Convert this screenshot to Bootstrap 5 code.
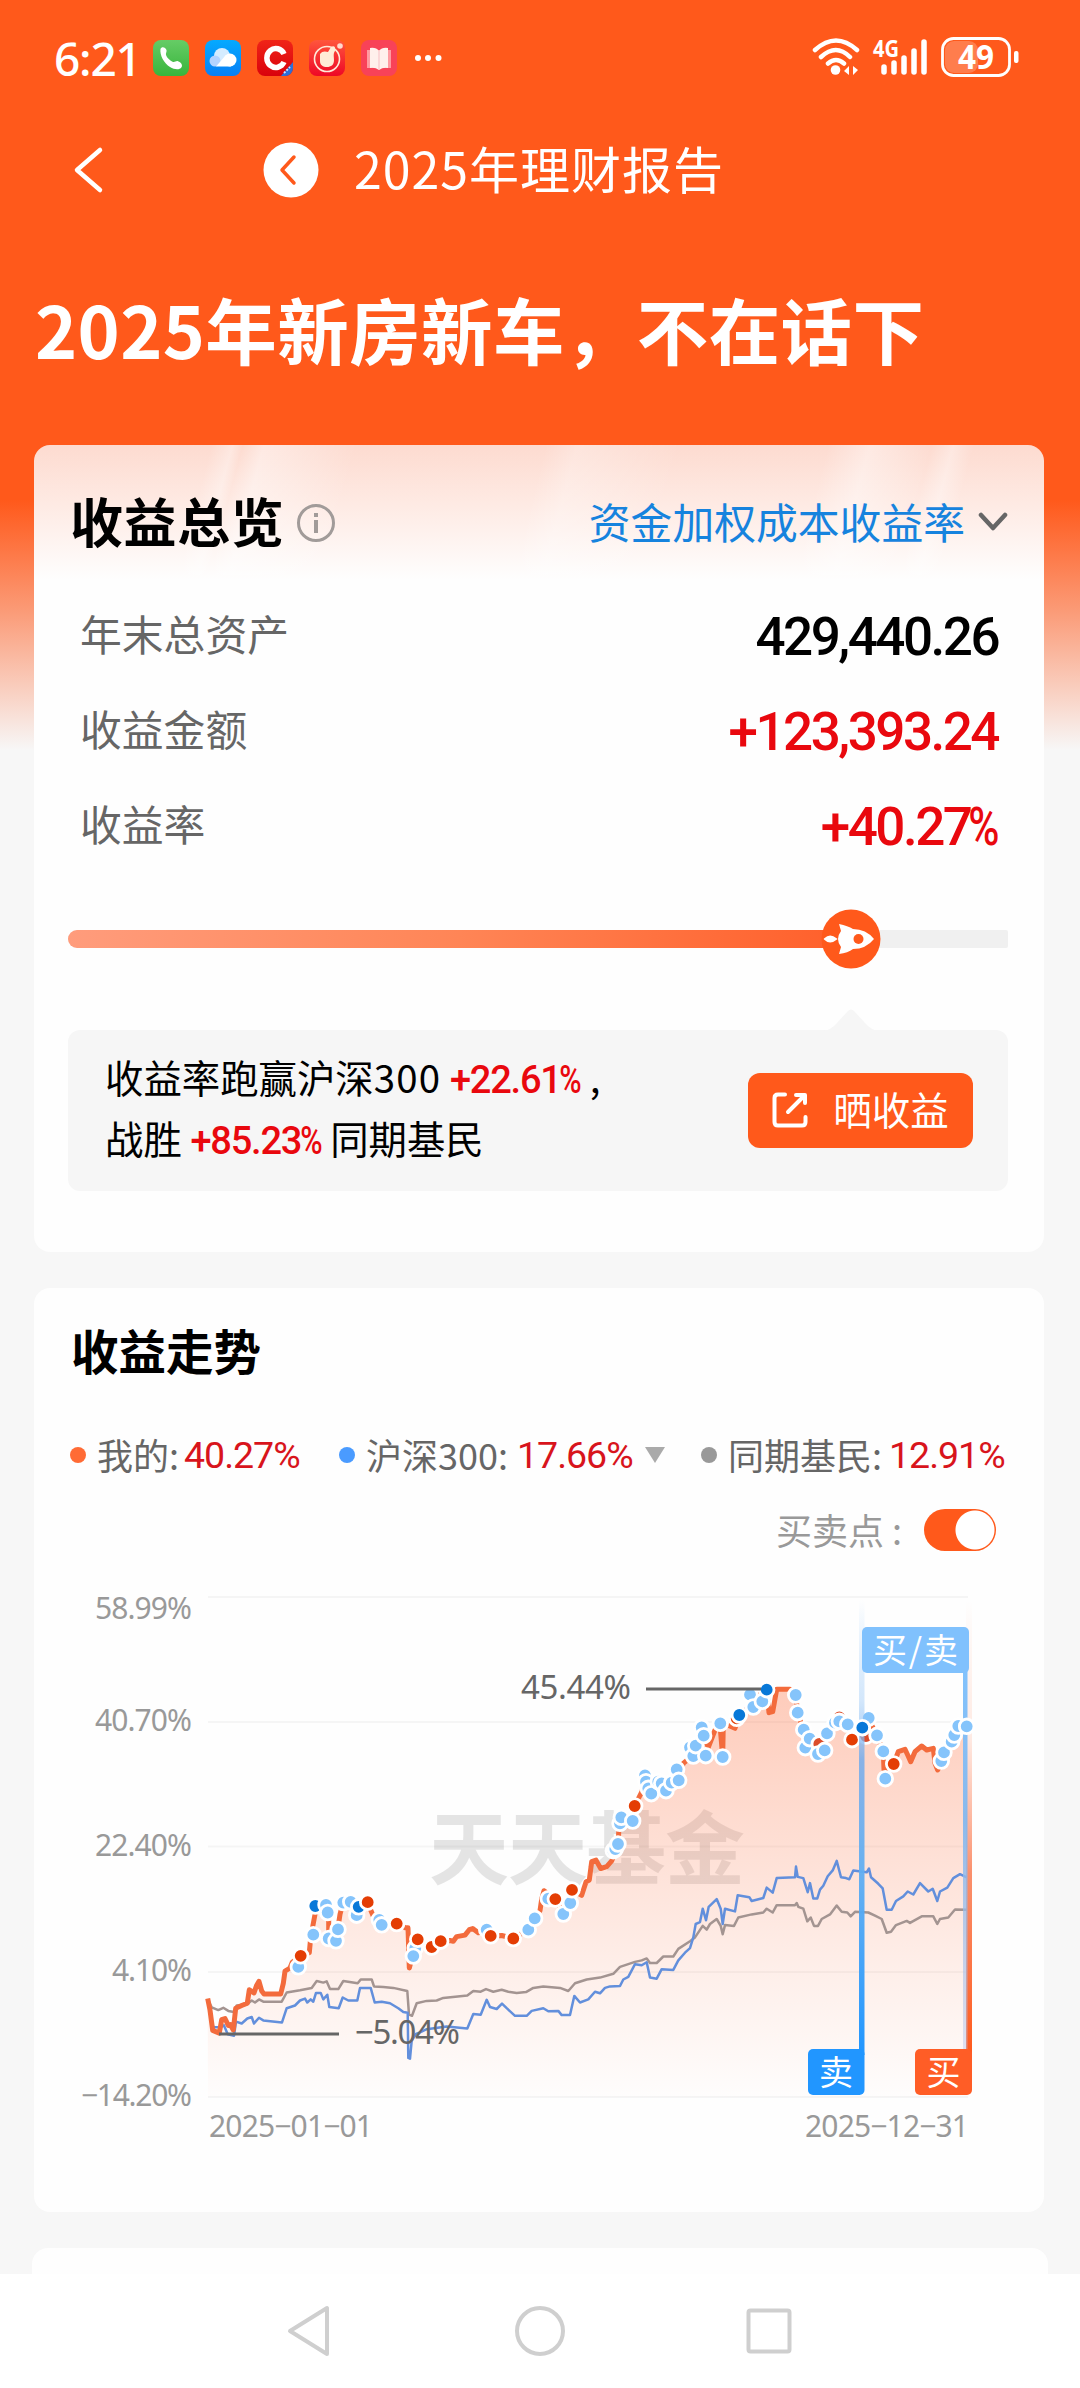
<!DOCTYPE html>
<html lang="zh-CN">
<head>
<meta charset="utf-8">
<meta name="viewport" content="width=device-width, initial-scale=1">
<title>2025年理财报告</title>
<link href="https://cdn.jsdelivr.net/npm/bootstrap@5.3.0/dist/css/bootstrap.min.css" rel="stylesheet">
<style>
  body { font-family: "Noto Sans CJK SC", sans-serif; background: #f7f7f7; color: #000; }
  .screen { width: 1080px; height: 2388px; background: linear-gradient(#ff591b 0, #ff591b 500px, #fb9a76 610px, #f9cfc0 690px, #f7f7f7 750px); }
  .status { height: 115px; padding: 0 60px 0 54px; }
  .clock { font: 500 46px/1 "Noto Sans", sans-serif; letter-spacing: -1.2px; width: 99px; }
  .app-icon { width: 36px; height: 36px; margin-right: 16px; }
  .topbar { height: 110px; padding-left: 72px; font-size: 50px; letter-spacing: 1px; }
  .topbar span { padding-bottom: 6px; }
  .headline { height: 220px; padding-left: 35px; font-size: 71.5px; font-weight: 700; letter-spacing: .4px; line-height: 1; padding-top: 68px; }
  .panel { border: 0; border-radius: 16px; margin: 0 36px 0 34px; background: #fefefe; }
  .overview { height: 807px; overflow: hidden;
    background: linear-gradient(105deg, #fff0 17%, #ffffff55 19%, #fff0 20%, #ffffff66 22%, #fff0 31%, #fff0 49%, #ffffff44 52%, #fff0 62%, #fff0 76%, #ffffff66 80%, #fff0 86%, #ffffff55 88%, #fff0 90%) 0 0/100% 130px no-repeat, linear-gradient(#fddbd0, #fee9e2 55px, #fefefe 135px); }
  .ov-head { height: 143px; padding: 12px 36px 0 36px; }
  .ov-title { font-size: 53px; font-weight: 700; letter-spacing: .6px; padding-bottom: 4px; }
  .ov-select { font-size: 41.8px; color: #1683de; padding-bottom: 2px; }
  .ov-row { height: 95.3px; padding: 0 46px 0 46px; font-size: 41.8px; color: #666; }
  .ov-row > span:first-child { padding-bottom: 5px; }
  .figure { font-family: Roboto, sans-serif; font-weight: 500; font-size: 53px; letter-spacing: -2.5px; color: #000; padding-top: 4px; }
  .pct { display: inline-block; transform: scaleX(.8); transform-origin: right; margin-left: -.17em; }
  .gain { color: #e9080e; }
  .track { height: 18px; margin: 56px 36px 0 34px; border-radius: 9px 2px 2px 9px; background: #f0f0f0; overflow: visible; }
  .track-fill { border-radius: 9px 0 0 9px; background: linear-gradient(90deg, #ff9c7c, #ff8556 50%, #ff5f2a); }
  .rocket { width: 60px; height: 60px; top: -21px; left: 83.3%; transform: translateX(-50%); }
  .bubble { height: 161px; margin: 82px 36px 0 34px; padding: 0 35px 0 37px; border-radius: 12px; background: #f6f6f6; }
  .bubble-tip { top: -22px; left: 755px; }
  .compare { font-size: 38.4px; line-height: 61px; padding-bottom: 7px; }
  .compare .line { height: 61px; white-space: nowrap; }
  .compare .gain { font-family: Roboto, sans-serif; font-weight: 500; font-size: 38px; line-height: 1; letter-spacing: -1.2px; }
  .share { width: 225px; height: 75px; border: 0; border-radius: 12px; background: #ff591b; color: #fff; font-size: 38.5px; line-height: 1; }
  .share span { padding-bottom: 4px; }
  .share:hover { background: #f04d10; color: #fff; }
  .trend { height: 924px; margin-top: 36px; }
  .trend-title { height: 126px; padding: 0 0 3px 37px; font-size: 47.5px; font-weight: 700; }
  .legend-row { height: 82px; padding-left: 36px; font-size: 36px; color: #666; white-space: nowrap; }
  .key { width: 16px; height: 16px; border-radius: 50%; }
  .series { padding: 0 0 3px 11px; }
  .rate { font-family: Roboto, sans-serif; font-size: 37.5px; letter-spacing: -1px; color: #d8141c; }
  .toggle-row { height: 68px; padding-right: 48px; font-size: 36px; color: #999; }
  .toggle-row label { margin-right: 22px; padding-bottom: 3px; }
  .toggle-row .form-check-input { width: 72px; height: 42px; margin: 0; border: 0; background-color: #ff591b; background-image: radial-gradient(circle at 51px 21px, #fff 19px, #ff591b 20px); background-size: 100%; }
  .chart text { font-family: "Noto Sans", sans-serif; }
  .chart .cjk { font-family: "Noto Sans CJK SC", sans-serif; }
  .next { height: 26px; margin: 36px 32px 0; border-radius: 16px 16px 0 0; }
  .sysnav { height: 114px; background: #fff; }
</style>
<script src="https://cdn.jsdelivr.net/npm/bootstrap@5.3.0/dist/js/bootstrap.bundle.min.js"></script>
</head>
<body>
<div class="screen d-flex flex-column overflow-hidden">

  <header class="text-white">
    <div class="status d-flex align-items-center">
      <span class="clock">6:21</span>
      <svg class="app-icon" viewBox="0 0 36 36"><defs><linearGradient id="gp" x2="0" y2="1"><stop stop-color="#66cc66"/><stop offset="1" stop-color="#38b53c"/></linearGradient></defs><rect width="36" height="36" rx="8" fill="url(#gp)"/><path d="M7.500 9c1-3 5-2 6 1 .5 2-1 3-.5 5 1 3 4 5.500 7 7 2 .5 3-1.500 5-.8 3 .8 5 4 3.500 6-2 3-7 2.500-11.500-.2C11 23.500 6.500 15 7.500 9z" fill="#fff"/></svg>
      <svg class="app-icon" viewBox="0 0 36 36"><defs><linearGradient id="gc" x2="0" y2="1"><stop stop-color="#05aaff"/><stop offset="1" stop-color="#087ff5"/></linearGradient></defs><rect width="36" height="36" rx="8" fill="url(#gc)"/><circle cx="17" cy="16" r="8" fill="#d5ecff"/><circle cx="10" cy="21" r="5.500" fill="#b4d3ff"/><circle cx="25" cy="20" r="6.500" fill="#fff"/><path d="M11 26.500 21 15l5 11.500z" fill="#fff"/></svg>
      <svg class="app-icon" viewBox="0 0 36 36"><defs><linearGradient id="gr" x2="0" y2="1"><stop stop-color="#f02418"/><stop offset="1" stop-color="#d9020c"/></linearGradient></defs><rect width="36" height="36" rx="8" fill="url(#gr)"/><path d="M36 22v6a8 8 0 0 1-8 8h-4z" fill="#2c6fd8"/><path d="m27 33 6-6" stroke="#d6e4ff" stroke-width="2" stroke-dasharray="2 1.500"/><path d="M27 14a9 9.500 0 1 0 0 8" fill="none" stroke="#fff" stroke-width="5.500"/></svg>
      <svg class="app-icon" viewBox="0 0 36 36"><defs><linearGradient id="gj" x2="0" y2="1"><stop stop-color="#ff563c"/><stop offset="1" stop-color="#ee0726"/></linearGradient></defs><rect width="36" height="36" rx="8" fill="url(#gj)"/><circle cx="18" cy="19" r="12.500" fill="none" stroke="#ffe9d8" stroke-width="1.600"/><path d="M11 14c2-3 5-3 8-2l3-5c3-2 5 0 4 4-2 3-1 5-1 9 0 5-3 7-7 7s-7-2-7-6z" fill="#ffecd6"/><circle cx="31" cy="6" r="2.800" fill="#ffd9cc"/></svg>
      <svg class="app-icon" viewBox="0 0 36 36"><rect width="36" height="36" rx="8" fill="#f84258"/><path d="M6 10h24v18H6z" fill="#ff9aa0"/><path d="M9 8q6-1 9 3v19q-4-3-9-2zM27 8q-6-1-9 3v19q4-3 9-2z" fill="#fff0ec"/><path d="M18 11v18" stroke="#f6bfc4"/></svg>
      <svg width="30" height="10" viewBox="0 0 30 10" fill="#fff"><circle cx="5" cy="5" r="3"/><circle cx="15" cy="5" r="3"/><circle cx="25.500" cy="5" r="3"/></svg>
      <svg class="ms-auto" width="210" height="50" viewBox="812 33 210 50">
        <g fill="none" stroke="#fff" stroke-linecap="round" stroke-width="4.500"><path d="M817 50q21-19 42 0M823 57q15-14 29 0M830 63.500q8-7 16 0"/></g>
        <circle cx="837.500" cy="70" r="4.800" fill="#fff"/><path d="m846 71 5-5v9zM855 66v9l5-5z" fill="#fff"/>
        <text x="875" y="57" font-size="23" font-weight="700" fill="#fff" font-family="Noto Sans" textLength="26" lengthAdjust="spacingAndGlyphs">4G</text>
        <path d="M886 67v5M896 63v9M906 58v14M916 51v21M926 42v30" stroke="#fff" stroke-width="5.500" stroke-linecap="round"/>
        <rect x="947" y="41" width="33" height="32" rx="9" fill="#fff" opacity=".22"/>
        <rect x="944.500" y="38.500" width="67" height="37" rx="11" fill="none" stroke="#fff" stroke-width="2.800"/>
        <rect x="1016" y="51" width="4.500" height="12" rx="2" fill="#fff"/>
        <text x="960" y="69" font-size="34" font-weight="700" fill="#fff" font-family="Noto Sans" textLength="36" lengthAdjust="spacingAndGlyphs">49</text>
      </svg>
    </div>
    <nav class="topbar d-flex align-items-center">
      <svg width="34" height="48" viewBox="0 0 34 48" fill="none" stroke="#fff" stroke-width="4.500" stroke-linecap="round" stroke-linejoin="round"><path d="M28 4 5 24l23 20"/></svg>
      <svg width="56" height="56" viewBox="0 0 56 56" style="margin-left:157px;margin-right:35px"><circle cx="28" cy="28" r="27.500" fill="#fff"/><path d="M31 15 19 28l12 13" fill="none" stroke="#ff591b" stroke-width="3.500" stroke-linecap="round" stroke-linejoin="round"/></svg>
      <span>2025年理财报告</span>
    </nav>
    <h1 class="headline m-0">2025年新房新车，不在话下</h1>
  </header>

  <section class="card panel overview flex-shrink-0">
    <div class="ov-head d-flex align-items-center">
      <span class="ov-title">收益总览</span>
      <svg width="40" height="40" viewBox="0 0 40 40" style="margin-left:12px" fill="none" stroke="#a19b99" stroke-width="3"><circle cx="20" cy="20" r="17.500"/><path d="M20 17v13" stroke-width="4"/><path d="M20 10v4" stroke-width="4"/></svg>
      <a class="ov-select ms-auto d-flex align-items-center text-decoration-none">资金加权成本收益率
        <svg width="30" height="20" viewBox="0 0 30 20" style="margin-left:13px" fill="none" stroke="#666" stroke-width="4.500" stroke-linecap="round" stroke-linejoin="round"><path d="m3 3 12 13L27 3"/></svg></a>
    </div>
    <div class="ov-row d-flex align-items-center justify-content-between"><span>年末总资产</span><span class="figure">429,440.26</span></div>
    <div class="ov-row d-flex align-items-center justify-content-between"><span>收益金额</span><span class="figure gain">+123,393.24</span></div>
    <div class="ov-row d-flex align-items-center justify-content-between"><span>收益率</span><span class="figure gain">+40.27<span class="pct">%</span></span></div>
    <div class="progress track position-relative">
      <div class="progress-bar track-fill" style="width:83.3%"></div>
      <svg class="rocket position-absolute" viewBox="0 0 60 60"><circle cx="30" cy="30" r="29.500" fill="#ff591b"/><path d="M4 30q5-5 11 0-6 5-11 0z" fill="#fff" stroke="#fff" stroke-width="2"/><path d="M18 15q9 2 14 5 13 0 21 10-8 10-21 10-5 4-14 5l2-7q-6-8 0-16z" fill="#fff"/><circle cx="37.500" cy="30" r="5" fill="#ff591b"/></svg>
    </div>
    <div class="bubble d-flex align-items-center justify-content-between position-relative">
      <svg class="bubble-tip position-absolute" width="56" height="23" viewBox="0 0 56 23"><path d="M0 23Q8 22 14 15L25 3q3-3 6 0l11 12q6 7 14 8z" fill="#f6f6f6"/></svg>
      <div class="compare"><div class="line">收益率跑赢沪深<span style="letter-spacing:1.2px">300</span> <span class="gain">+22.61<span class="pct">%</span></span> ,</div><div class="line">战胜 <span class="gain">+85.23<span class="pct">%</span></span> 同期基民</div></div>
      <button type="button" class="btn share d-flex align-items-center justify-content-center">
        <svg width="36" height="36" viewBox="0 0 36 36" style="margin-right:25px" fill="none" stroke="#fff" stroke-width="4" stroke-linecap="round" stroke-linejoin="round"><path d="M13 2.500H6Q2.500 2.500 2.500 6v24q0 3.500 3.500 3.500h24q3.500 0 3.500-3.500v-5M16 20 32 4M24 3h9v8"/></svg><span>晒收益</span></button>
    </div>
  </section>

  <section class="card panel trend flex-shrink-0">
    <div class="trend-title d-flex align-items-center">收益走势</div>
    <div class="legend-row d-flex align-items-center">
      <span class="key" style="background:#ff6b35"></span><span class="series" style="width:98px">我的:</span><span class="rate" style="width:155px">40.27%</span>
      <span class="key" style="background:#4a9bff"></span><span class="series" style="width:162px">沪深300:</span><span class="rate" style="width:127px">17.66%</span>
      <svg width="22" height="18" viewBox="0 0 22 18" style="margin-right:35px"><path d="M1 1h20L11 17z" fill="#aaa"/></svg>
      <span class="key" style="background:#999"></span><span class="series" style="width:172px">同期基民:</span><span class="rate">12.91%</span>
    </div>
    <div class="toggle-row form-check form-switch d-flex align-items-center justify-content-end m-0">
      <label for="trades">买卖点 :</label><input class="form-check-input shadow-none" type="checkbox" id="trades" checked>
    </div>
    <svg class="chart d-block" id="chart" width="1010" height="606" viewBox="0 -6 1010 606"></svg>
  </section>

  <div class="card panel next flex-shrink-0"></div>
  <footer class="sysnav flex-shrink-0">
    <svg class="d-block" width="1080" height="114" viewBox="0 0 1080 114" fill="none" stroke="#cfcfcf" stroke-width="4" stroke-linejoin="round"><path d="M327 34v46L290 57z"/><circle cx="540" cy="57" r="23"/><rect x="748.500" y="36.500" width="41" height="41" rx="2"/></svg>
  </footer>
</div>

<script>
// Series are stored per survey grid; each grid has its own origin and scale.
const wide = ([u, v]) => [26 + u / 3, v / 2.613];
const peak = ([a, b]) => [556 + a / 3, 90 + b / 3];
const pts = (s, f) => s.trim().split(/\s+/).map(p => f(p.split(',').map(Number)));
const path = a => 'M' + a.map(p => p.map(n => n.toFixed(1)).join(' ')).join('L');

const mine = [
  ...pts(`443,1120 450,1150 458,1203 478,1210 485,1175 495,1172 505,1190 511,1188 520,1202 527,1145 545,1138 562,1132 568,1097 582,1105 590,1085 597,1075 605,1100 612,1108 662,1108 670,1080 675,1048 690,1040 697,1025 722,1008 748,1000 752,960 765,900 767,878 798,875 806,900 806,945 828,970 840,900 850,868 872,866 890,880 900,880 922,867 940,905 962,925 1010,924 1036,935 1044,935 1048,1040 1060,1000 1073,965 1115,985 1142,970 1170,968 1180,970 1190,958 1215,954 1228,940 1238,937 1255,948 1280,940 1292,957 1325,955 1360,963 1405,940 1424,910 1440,890 1445,860 1452,838 1487,860 1510,898 1530,868 1536,836 1565,850 1578,815 1588,810 1595,762 1608,758 1622,780 1640,775 1655,760 1675,717 1677,660 1718,655 1725,615 1745,580`, wide),
  ...pts(`155,400 165,350 180,385 225,370 262,360 280,310 310,285 340,225 355,262 375,210 390,195 398,290 400,190 435,205 448,165 480,140 500,110 530,90 537,158 548,155 560,88 600,88 617,105 623,158 640,210 660,237 690,280 710,220 735,185 745,160 770,190 785,238 817,205 835,175 860,225 880,275 882,330 911,312 925,275 945,268 953,285 962,305 975,275 995,258 1010,270 1030,265 1035,310 1043,330 1055,305 1080,260 1100,200 1130,200`, peak)];
const index = pts(`443,1125 460,1195 480,1195 492,1190 503,1213 522,1217 528,1180 545,1185 562,1172 575,1168 582,1185 597,1170 610,1177 666,1182 680,1145 705,1138 720,1125 735,1120 742,1130 752,1122 760,1128 768,1105 782,1105 790,1122 802,1110 808,1142 836,1145 848,1117 865,1125 892,1125 900,1092 932,1092 944,1130 965,1128 990,1132 1015,1145 1030,1155 1043,1157 1045,1275 1050,1277 1055,1230 1068,1212 1080,1208 1100,1200 1160,1193 1222,1198 1240,1160 1262,1162 1280,1123 1290,1142 1310,1147 1326,1133 1340,1145 1365,1165 1400,1165 1415,1152 1450,1145 1465,1153 1495,1152 1505,1163 1530,1163 1543,1113 1560,1130 1585,1122 1605,1102 1620,1106 1635,1092 1650,1088 1680,1087 1690,1070 1705,1063 1725,1030 1745,1033 1760,1025 1770,1065 1790,1068 1805,1043 1840,1045 1855,1020 1875,1000 1890,988 1900,960 1907,925 1920,920 1928,885 1938,915 1946,880 1970,860 1982,885 1988,925 1995,885 2025,892 2033,850 2068,855 2075,865 2110,857 2120,830 2138,843 2150,805 2205,803 2208,775 2213,802 2230,805 2243,842 2250,818 2260,858 2272,858 2280,835 2290,825 2303,800 2318,785 2330,760 2343,803 2358,805 2368,808 2380,785 2420,790 2427,780 2433,803 2455,820 2468,832 2480,888 2495,888 2508,865 2530,853 2543,840 2560,848 2580,818 2605,840 2618,833 2632,865 2640,840 2662,830 2680,805 2700,795 2720,803`, wide);
const peers = pts(`443,1122 455,1143 475,1150 490,1144 505,1152 522,1155 530,1138 560,1135 575,1125 585,1130 597,1122 610,1128 665,1128 680,1104 720,1098 755,1092 770,1074 790,1078 800,1075 810,1095 835,1095 850,1074 893,1080 902,1070 935,1070 942,1088 970,1090 1000,1092 1042,1100 1047,1162 1056,1165 1070,1132 1100,1126 1130,1125 1150,1118 1222,1112 1240,1100 1262,1102 1278,1095 1300,1102 1325,1097 1345,1102 1370,1105 1398,1103 1420,1092 1450,1088 1500,1092 1525,1100 1545,1080 1580,1070 1620,1065 1660,1055 1680,1037 1725,1024 1745,1020 1760,1015 1770,1027 1790,1027 1810,1010 1840,1010 1855,990 1890,970 1905,960 1928,930 1940,940 1950,925 1970,912 1982,930 1988,952 1995,928 2022,930 2035,908 2075,900 2110,895 2120,885 2138,895 2150,876 2205,876 2210,870 2215,880 2230,885 2242,918 2252,908 2262,930 2274,930 2285,912 2310,900 2330,877 2345,893 2362,895 2372,905 2385,893 2425,895 2445,903 2465,912 2480,948 2493,945 2508,928 2540,917 2550,922 2585,905 2620,905 2632,925 2640,912 2665,908 2685,887 2720,888`, wide);

// b = buy/sell, r = buy, d = sell, h = partly hidden buy
const marks = [
  ...`715,1037b 722,1008r 760,953b 766,878d 798,875b 803,895b 806,963b 828,969b 834,939b 850,869b 872,867b 890,902b 896,880d 923,868r 958,914b 965,927b 1010,924r 1066,988b 1060,1009b 1073,965r 1115,985r 1142,970r 1280,940b 1292,956r 1360,963r 1405,940b 1424,910b 1465,859b 1486,860r 1510,899b 1531,870b 1536,836r`.split(' ').map(s => [wide(s.slice(0, -1).split(',').map(Number)), s.slice(-1)]),
  ...`70,572b 76,567b 84,552b 90,490b 94,472b 128,483b 134,438r 165,346b 168,365b 175,385b 184,401b 205,365b 215,370b 228,392b 245,368b 260,328b 266,361b 300,262b 310,288b 317,257b 335,202b 341,227b 347,287b 391,190b 398,291b 440,175r 448,165d 480,104b 490,141b 517,124b 530,89d 617,105b 623,158b 641,209b 646,263b 659,236b 688,252h 684,282b 704,271b 711,220b 748,172h 735,188b 748,184b 773,193b 786,239r 828,228h 836,174b 861,226b 817,203d 880,274b 886,356b 911,312r 1054,303b 1062,277b 1085,245b 1093,225b 1105,198b 1130,199b`.split(' ').map(s => [peak(s.slice(0, -1).split(',').map(Number)), s.slice(-1)])];
const fills = { b: '#85c4fb', r: '#e43d04', d: '#0878d8', h: '#dc4d2a' };
const dot = ([[x, y], k]) => `<circle cx="${x.toFixed(1)}" cy="${y.toFixed(1)}" r="7.300" fill="${fills[k]}" stroke="#fff" stroke-width="2.800"/>`;

const grid = [27, 152, 276.500, 402, 527].map(y => `<path d="M174 ${y}H934" stroke="#000" stroke-opacity=".035" stroke-width="2"/>`).join('');
const axis = [['58.99%', 49, 97], ['40.70%', 161, 97], ['22.40%', 286, 97], ['4.10%', 411, 80], ['−14.20%', 536, 111]]
  .map(([t, y, w]) => `<text x="${158 - w}" y="${y}" font-size="30" fill="#999" textLength="${w}">${t}</text>`).join('');
const grad = (id, stops) => `<linearGradient id="${id}" x2="0" y2="1">${stops.map(([o, c, a]) => `<stop offset="${o}" stop-color="${c}" stop-opacity="${a}"/>`).join('')}</linearGradient>`;

document.getElementById('chart').innerHTML = `
  <defs>${grad('area', [[0, '#ff6a38', .34], [.35, '#ff6a38', .22], [.7, '#ff6a38', .1], [1, '#ff6a38', .01]])}
  ${grad('sell', [[0, '#7fbcf7', 0], [.22, '#9fcbf8', .45], [.35, '#74acec', .85], [.6, '#60aef2', .95], [1, '#2196ff', 1]])}
  ${grad('buy', [[0, '#ff591b', 0], [.3, '#ff7c50', .15], [.6, '#f96b3c', .75], [1, '#ff591b', 1]])}
  ${grad('both', [[0, '#82c2fc', 1], [.4, '#84b8ee', .95], [1, '#b9c5e8', .45]])}</defs>
  ${grid}
  <text class="cjk" x="395" y="308" font-size="80" font-weight="700" fill="#000" fill-opacity=".1" textLength="316">天天基金</text>
  <path d="${path(mine)}L933 527H174Z" fill="url(#area)"/>
  <path d="${path(peers)}" fill="none" stroke="#a39491" stroke-width="2.500" stroke-linejoin="round"/>
  <path d="${path(index)}" fill="none" stroke="#628fdc" stroke-width="2.500" stroke-linejoin="round"/>
  <path d="${path(mine)}" fill="none" stroke="#f36b3c" stroke-width="5" stroke-linejoin="round"/>
  <path d="M185 464H305" stroke="#666" stroke-width="2.800"/>
  <text x="321" y="474" font-size="33" fill="#666" textLength="105">−5.04%</text>
  <text x="487" y="129" font-size="33" fill="#666" textLength="110">45.44%</text>
  ${marks.map(dot).join('')}
  <path d="M612 119H727" stroke="#666" stroke-width="2.800"/>
  <rect x="825" y="30" width="5.500" height="455" fill="url(#sell)"/>
  <rect x="932" y="30" width="6" height="455" fill="url(#buy)"/>
  <rect x="929" y="100" width="4.500" height="380" fill="url(#both)"/>
  ${marks.filter(([[x], k]) => (k === 'd' && x > 800) || x > 930).map(dot).join('')}
  <rect x="828" y="57" width="107" height="46" rx="5" fill="#80c1fd"/>
  <rect x="774" y="479" width="56.500" height="46" rx="5" fill="#2196ff"/>
  <rect x="881" y="479" width="57" height="46" rx="5" fill="#ff5d26"/>
  <g fill="#fff" font-size="34"><text class="cjk" x="839" y="92.500" textLength="85">买/卖</text><text class="cjk" x="785" y="514.500">卖</text><text class="cjk" x="892.500" y="514.500">买</text></g>
  ${axis}
  <text x="175" y="567" font-size="30" fill="#999" textLength="164">2025−01−01</text>
  <text x="771" y="567" font-size="30" fill="#999" textLength="164">2025−12−31</text>`;
</script>
</body>
</html>
